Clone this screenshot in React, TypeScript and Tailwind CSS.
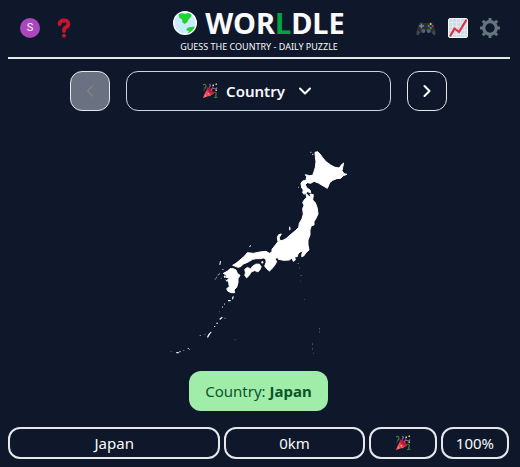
import { ChevronDown, ChevronLeft, ChevronRight } from "lucide-react";

function Party({ className }: { className: string }) {
  return (
    <svg viewBox="0 0 32 32" className={className} aria-hidden="true">
      <path d="M2 30 11 9Q20 12 24 22Z" fill="#dd2e44" />
      <path d="M2 30 6 20 12 26Z" fill="#ea596e" />
      <path d="M11 9Q16 9 20 14T24 22Q17 21 13 16T11 9Z" fill="#b51a31" />
      <path d="m9 16 9 9-4 2-7-7Z" fill="#f4516a" />
      <path d="M2 4Q8 1 8 6T4 10M23 19Q30 17 28 23T31 29M24 29h4" fill="none" stroke="#4c7a33" strokeWidth="2.4" />
      <path d="M14 9Q19 6 15 2M19 15Q19 9 24 11T30 9" fill="none" stroke="#8067b0" strokeWidth="2.4" />
      <path d="M21 3h3v3h-3zM27 1h3v3h-3zM27 13h3v3h-3zM12 20h2v2h-2zM6 25h2v2H6z" fill="#ffcc4d" />
      <path d="M20 7h3v2h-3zM3 13h2v2H3z" fill="#9266cc" />
    </svg>
  );
}

function Globe() {
  return (
    <svg viewBox="0 0 24 24" className="size-6" aria-hidden="true">
      <circle cx="12" cy="12" r="11.3" fill="#c9edfc" stroke="#fff" strokeWidth="1.4" />
      <path d="M5.5 3.8Q7 2 9.5 2.2L12 3 15 2Q17 2.3 18.6 3.8L18 6 15.8 8 14 11.5 11.5 13 9.5 11.5 9 8.5 6.3 6.8Z" fill="#1fd42f" />
      <path d="M13 19 15 16.5 21.8 15.5Q20 20.5 14.5 22.5L16 20Z" fill="#1fd42f" />
    </svg>
  );
}

function Question() {
  return (
    <svg viewBox="0 0 14 20" className="h-5 w-3.5" aria-hidden="true">
      <path d="M2.6 6Q2.6 2.5 7 2.5T11.3 6.2Q11.3 8.2 9 9.3T7 13" fill="none" stroke="#c8152d" strokeWidth="3.8" strokeLinecap="round" />
      <circle cx="7" cy="17.8" r="2" fill="#c8152d" />
    </svg>
  );
}

function Gamepad() {
  return (
    <svg viewBox="0 0 20 20" className="size-5" aria-hidden="true">
      <path d="M3.5 5Q5 3.4 8 5h4q3-1.6 4.5 0 2 3 3.2 10.500 0 2.500-1.700 1.800L14 13H6l-4 4.300Q.3 18 .3 15.500 1.500 8 3.500 5Z" fill="#292f33" />
      <path d="m1 12 3.500 2.500-2.500 2.800Q0 17.500 1 12ZM19 12l-3.500 2.500 2.500 2.800Q20 17.500 19 12Z" fill="#3f474c" />
      <circle cx="7.300" cy="13" r="2" fill="#57646d" />
      <circle cx="12.700" cy="13" r="2" fill="#57646d" />
      <path d="M5.400 5.500v5M3 8h5" stroke="#78868f" strokeWidth="1.500" />
      <circle cx="14.700" cy="6" r="1" fill="#ffcc4d" />
      <circle cx="12.700" cy="8" r="1" fill="#3b94dd" />
      <circle cx="16.700" cy="8" r="1" fill="#dd2e44" />
      <circle cx="14.700" cy="10" r="1" fill="#5ca93b" />
    </svg>
  );
}

function Chart() {
  return (
    <svg viewBox="0 0 20 20" className="size-5" aria-hidden="true">
      <rect x=".5" y=".5" width="19" height="19" rx="1.5" fill="#d0dce3" stroke="#f1f5f8" />
      <path d="M4.500 1v18M8.500 1v18M12.500 1v18M16.500 1v18M1 4.500h18M1 8.500h18M1 12.500h18M1 16.500h18" stroke="#e6edf2" strokeWidth=".7" />
      <path d="m2.500 17.500 4-7 4.500 3.500 7-11.500" fill="none" stroke="#dd2e44" strokeWidth="2.200" strokeLinecap="round" strokeLinejoin="round" />
    </svg>
  );
}

function Gear() {
  return (
    <svg viewBox="0 0 20 20" className="size-5" aria-hidden="true">
      <g fill="none" stroke="#66757f">
        <circle cx="10" cy="10" r="6.300" strokeWidth="3.200" />
        <path d="M10 0v3M10 17v3M0 10h3M17 10h3M2.800 2.800 5 5M15 15l2.200 2.200M17.200 2.800 15 5M5 15l-2.200 2.200" strokeWidth="3" />
      </g>
    </svg>
  );
}

function JapanMap() {
  return (
    <svg viewBox="163 145 191 215" className="h-[215px] w-[191px]" fill="#fff" role="img" aria-label="Country outline">
      <g transform="translate(290 140) scale(.33333)">
        <path stroke="#fff" strokeWidth="3" d="M75 37 83 35 90 42 98 53 108 65 122 75 135 82 148 84 153 76 161 69 158 82 156 92 162 101 171 103 160 107 152 115 140 116 128 121 119 128 112 145 100 138 85 129 72 124 62 130 52 128 46 134 50 143 60 150 62 158 52 155 42 163 38 158 40 150 35 143 33 130 38 123 48 121 50 110 46 104 58 107 68 106 72 95 76 82 78 65 76 50Z" />
        <path d="M61 35h3v4h-3zM66 41h4v4h-4zM24 140h3v3h-3z" opacity=".7" />
      </g>
      <g transform="translate(210 190) scale(.33333)">
        <path stroke="#fff" strokeWidth="3" d="M278 38 284 28 290 23 288 10 296 18 304 22 300 12 310 14 308 30 316 38 322 55 324 72 318 85 312 95 312 105 304 107 300 120 300 135 294 150 294 165 297 180 288 188 281 198 275 200 276 190 280 182 270 186 264 192 262 200 254 200 256 210 250 214 246 204 238 210 222 211 205 208 202 200 196 208 200 215 194 226 184 238 178 243 170 236 164 228 168 218 168 208 160 204 150 206 138 206 128 208 118 214 110 218 100 222 92 230 84 232 74 228 68 226 78 220 90 210 104 198 112 188 130 190 150 186 168 184 178 190 186 186 186 178 194 168 204 155 202 142 206 134 214 132 208 142 208 150 216 152 228 146 244 132 256 122 266 112 268 100 276 86 280 72 278 56 282 46Z" />
        <path stroke="#fff" strokeWidth="2" d="M104 238 112 232 122 236 128 228 138 222 148 222 154 230 150 240 144 246 134 242 124 246 118 256 110 264 104 256 106 248Z" />
        <path stroke="#fff" strokeWidth="3" d="M40 250 52 244 60 236 70 236 78 240 82 250 90 256 84 266 84 278 80 292 72 300 74 308 64 308 54 304 50 296 58 290 56 278 52 270 58 264 48 262 50 256Z" />
        <path d="m237 113 3-5 2 10-4 4ZM153 216l5-4 3 6-5 3ZM118 169l4-4 1 3-4 4ZM28 224l2-11 3 1-2 11ZM36 240l3-4 2 4ZM41 258l5-2 2 6-5 2ZM46 268l6 4-3 3Z" />
        <path d="m13 268 5-4 2-5 2 3-6 7ZM22 255l7-6 2 2-7 6ZM263 219h3v3h-3zM267 233h3v2h-3zM272 256h3v2h-3zM32 263h3v3h-3z" opacity=".5" />
      </g>
      <g transform="translate(165 280) scale(.33333)">
        <path d="M189 60h8v4h-8zM202 50l4-2-1 8-4 3ZM163 116l8-6 2 3-8 7ZM154 128h5v3h-5zM147 138h4v3h-4zM126 172l3-8 8-9 3 1-6 8-5 9ZM34 216h7v4h-7zM43 214h4v3h-4zM68 205h4v2h-4z" />
        <path d="M177 70h3v5h-3zM171 78h3v6h-3zM163 94h2v3h-2zM178 113h4v3h-4zM104 165h4v3h-4zM72 207h3v3h-3zM54 210h4v2h-4zM118 163h3v2h-3z" opacity=".5" />
        <path d="M417 58h3v2h-3zM462 144h3v5h-3zM462 154h3v4h-3zM441 190h3v5h-3zM441 204h3v5h-3zM444 218h3v3h-3zM208 178h4v3h-4zM405 2h2v3h-2zM16 213h5v2h-5z" opacity=".25" />
      </g>
    </svg>
  );
}

const cell = "flex h-8 items-center justify-center rounded-xl border-2 border-gray-200";

export default function App() {
  return (
    <div className="flex min-h-screen flex-col bg-[#0f172a] pr-2.5 pl-2 font-['Noto_Sans',sans-serif] text-[15px] text-slate-50">
      <header className="flex h-[59px] items-center justify-between border-b-2 border-gray-200 pb-px">
        <div className="flex w-24 items-center gap-3.5 pl-3">
          <button aria-label="Account" className="flex size-5 items-center justify-center rounded-full bg-[#ab47bc] font-['Roboto',sans-serif] text-[11px]">S</button>
          <button aria-label="Help" className="flex w-5 justify-center"><Question /></button>
        </div>
        <div className="flex flex-col items-center pt-1.5">
          <h1 className="flex h-8 items-center gap-2 text-[29px] font-bold">
            <Globe />
            <span>WOR<span className="text-green-600">L</span>DLE</span>
          </h1>
          <p className="text-[9px] leading-4">GUESS THE COUNTRY - DAILY PUZZLE</p>
        </div>
        <div className="flex w-24 items-center justify-end gap-3 pr-2.5">
          <button aria-label="Games"><Gamepad /></button>
          <button aria-label="Stats"><Chart /></button>
          <button aria-label="Settings"><Gear /></button>
        </div>
      </header>
      <main className="flex flex-1 flex-col items-center pr-px">
        <nav className="mt-3 flex w-full justify-center gap-4">
          <button disabled aria-label="Previous" className="flex size-10 items-center justify-center rounded-xl border border-gray-200 bg-gray-500 text-[#857f7c]">
            <ChevronLeft className="size-5" />
          </button>
          <button className="flex h-10 w-[265px] items-center justify-center rounded-xl border border-slate-300 font-semibold">
            <Party className="mr-2 size-4" />
            <span>Country</span>
            <ChevronDown className="ml-2.5 size-5" strokeWidth={2.5} />
          </button>
          <button aria-label="Next" className="flex size-10 items-center justify-center rounded-xl border border-gray-200">
            <ChevronRight className="size-5" strokeWidth={2.5} />
          </button>
        </nav>
        <div className="mt-[34px] mb-[11px]"><JapanMap /></div>
        <p className="flex h-10 items-center rounded-xl bg-[#9feda9] px-4 text-green-900">
          <span>Country: <b>Japan</b></span>
        </p>
        <div className="mt-4 grid w-full grid-cols-7 gap-1 pb-2">
          <div className={`${cell} col-span-3`}>Japan</div>
          <div className={`${cell} col-span-2`}>0km</div>
          <div className={cell}><Party className="size-4" /></div>
          <div className={cell}>100%</div>
        </div>
      </main>
    </div>
  );
}
